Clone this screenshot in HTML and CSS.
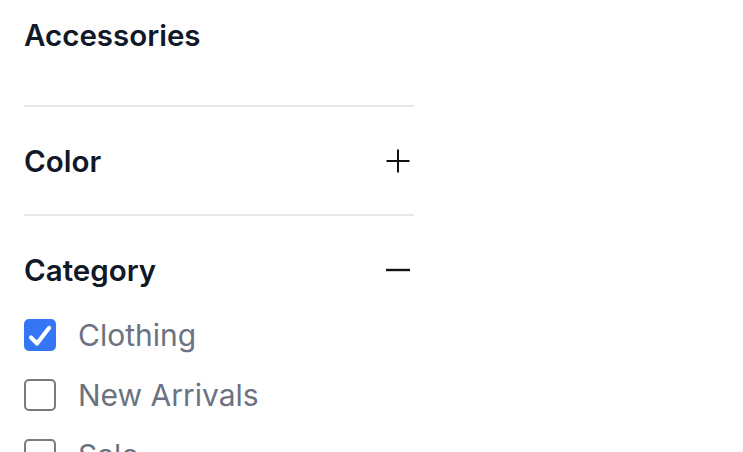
FILE: index.html
```html
<!DOCTYPE html>
<html lang="en">
<head>
<meta charset="utf-8">
<title>Filters</title>
<link rel="stylesheet" href="styles.css">
</head>
<body>
<div class="panel">
  <ul class="cat-list">
    <li class="cat-item">Accessories</li>
  </ul>

  <section class="filter">
    <h3 class="filter-head">
      <span class="filter-title">Color</span>
      <svg class="toggle" width="24" height="24" viewBox="0 0 24 24" aria-hidden="true">
        <path d="M12 0.5v23M0.5 12h23" stroke="currentColor" stroke-width="2" fill="none"/>
      </svg>
    </h3>
  </section>

  <section class="filter">
    <h3 class="filter-head">
      <span class="filter-title">Category</span>
      <svg class="toggle" width="24" height="24" viewBox="0 0 24 24" aria-hidden="true">
        <path d="M0 12h24" stroke="currentColor" stroke-width="2.4" fill="none"/>
      </svg>
    </h3>
    <div class="options">
      <label class="option">
        <span class="box checked">
          <svg width="32" height="32" viewBox="0 0 32 32" aria-hidden="true">
            <path d="M7 18.5l6 6L25 9" stroke="#fff" stroke-width="4.2" fill="none" stroke-linecap="round" stroke-linejoin="round"/>
          </svg>
        </span>
        <span class="opt-label">Clothing</span>
      </label>
      <label class="option">
        <span class="box"></span>
        <span class="opt-label">New Arrivals</span>
      </label>
      <label class="option">
        <span class="box"></span>
        <span class="opt-label">Sale</span>
      </label>
    </div>
  </section>
</div>
</body>
</html>
```

FILE: styles.css
```css
html, body {
  margin: 0;
  padding: 0;
  background: #ffffff;
}

body {
  font-family: Inter, "Liberation Sans", Arial, sans-serif;
  overflow: hidden;
}

.panel {
  width: 390px;
  padding: 15px 0 0 24px;
}

.cat-list {
  list-style: none;
  margin: 0;
  padding: 0 0 50px 0;
}

.cat-item {
  font-size: 29.5px;
  font-weight: 600;
  line-height: 40px;
  color: #111827;
}

.filter {
  border-top: 2px solid #e5e7eb;
  padding: 34px 0 33px 0;
}

.filter-head {
  margin: 0;
  display: flex;
  align-items: center;
  justify-content: space-between;
  height: 40px;
  padding-right: 4px;
}

.filter-title {
  font-size: 29.5px;
  font-weight: 600;
  line-height: 40px;
  color: #111827;
}

.toggle {
  color: #111111;
  display: block;
}

.options {
  margin-top: 25px;
  display: flex;
  flex-direction: column;
  gap: 20px;
}

.option {
  display: flex;
  align-items: center;
  height: 40px;
}

.box {
  width: 32px;
  height: 32px;
  box-sizing: border-box;
  border: 2px solid #7a7a7a;
  border-radius: 5px;
  background: #fff;
  flex: none;
  display: flex;
  align-items: center;
  justify-content: center;
}

.box.checked {
  border: none;
  background: #3476f5;
}

.box svg {
  display: block;
}

.opt-label {
  margin-left: 22px;
  font-size: 30px;
  line-height: 40px;
  color: #6b7280;
}
```
